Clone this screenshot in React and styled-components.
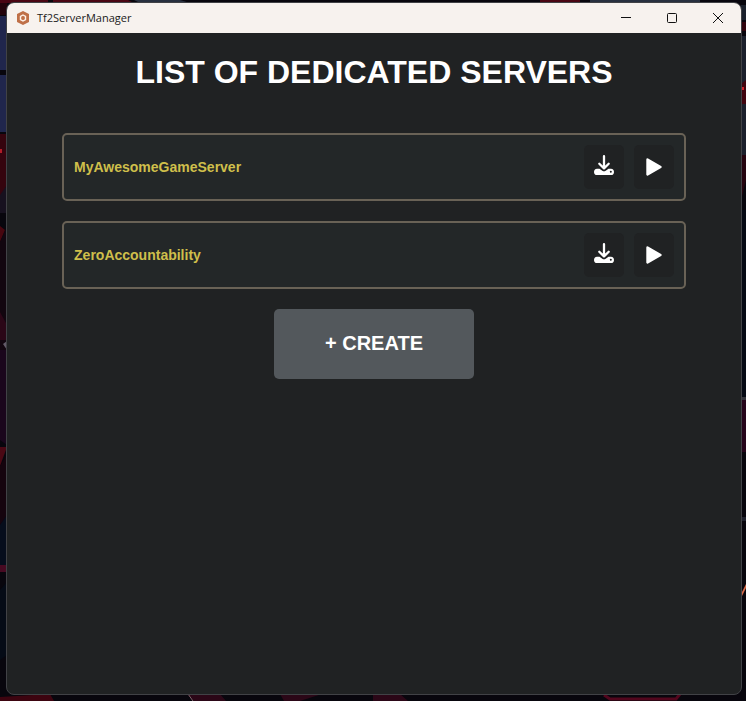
import React from "react";
import styled, { createGlobalStyle } from "styled-components";

const GlobalStyle = createGlobalStyle`
  *, *::before, *::after { box-sizing: border-box; }
  body { margin: 0; background: #07060c; }
`;

const Desktop = styled.div`
  position: relative;
  isolation: isolate;
  display: flex;
  min-height: 100vh;
  padding: 2px 4px 6px 6px;
`;

const WallpaperArt = styled.svg`
  position: absolute;
  inset: 0;
  z-index: -1;
  width: 100%;
  height: 100%;
`;

const AppWindow = styled.div`
  flex: 1;
  display: flex;
  flex-direction: column;
  overflow: hidden;
  border: 1px solid #414246;
  border-radius: 8px;
  background: #202223;
  font-family: "Liberation Sans", Arial, sans-serif;
`;

const TitleBar = styled.header`
  display: flex;
  align-items: center;
  height: 30px;
  padding-left: 9px;
  background: #f7f2ee;
  color: #1a1a1a;
`;

const AppName = styled.span`
  flex: 1;
  margin-left: 7px;
  font: 11px/16px "Open Sans", "Segoe UI", sans-serif;
`;

const WindowControls = styled.div`
  display: flex;
`;

const WindowButton = styled.button`
  display: grid;
  place-items: center;
  width: 46px;
  height: 30px;
  padding: 0;
  border: 0;
  background: transparent;
  color: #111;
  &:hover { background: #e6e1dd; }
`;

const Content = styled.main`
  display: flex;
  flex-direction: column;
  align-items: center;
  gap: 20px;
  padding: 20px 0;
`;

const Heading = styled.h1`
  margin: 0 0 22px;
  color: #fff;
  font-size: 32px;
  line-height: 38px;
  font-weight: 700;
`;

const ServerList = styled.ul`
  display: flex;
  flex-direction: column;
  gap: 20px;
  width: 85%;
  margin: 0;
  padding: 0;
  list-style: none;
`;

const ServerRow = styled.li`
  display: flex;
  align-items: center;
  gap: 10px;
  padding: 10px;
  border: 2px solid #696256;
  border-radius: 5px;
  background: #232728;
`;

const ServerName = styled.span`
  flex: 1;
  color: #cfbf4b;
  font-size: 14px;
  line-height: 18px;
  font-weight: 700;
`;

const IconButton = styled.button`
  display: grid;
  place-items: center;
  width: 40px;
  height: 44px;
  padding: 0;
  border: 0;
  border-radius: 5px;
  background: #202223;
  color: #fff;
  cursor: pointer;
`;

const CreateButton = styled.button`
  width: 200px;
  height: 70px;
  padding: 0 0 2px;
  border: 0;
  border-radius: 5px;
  background: #53585c;
  color: #fff;
  font: 700 20px/24px "Liberation Sans", Arial, sans-serif;
  cursor: pointer;
`;

const Wallpaper = () => (
  <WallpaperArt viewBox="0 0 746 701" preserveAspectRatio="none" aria-hidden="true">
    <rect width="746" height="701" fill="#08060d" />
    <path d="M0 0H48V3H0Z M53 0H128L134 3H53Z M540 0H580V3H540Z" fill="#4a0614" />
    <path d="M134 0H180L190 3H140Z M590 0H700V3H590Z" fill="#28303f" />
    <path d="M0 3H7V15H0Z" fill="#24040c" />
    <path d="M0 16H7V70H0Z M0 75H7V132H0Z" fill="#20264d" />
    <path d="M0 134H7V185L0 200Z" fill="#35040e" />
    <path d="M0 149H2V153H0Z" fill="#b01c28" />
    <path d="M0 195L7 185V213H0Z" fill="#17111f" />
    <path d="M0 226L5 230L0 242Z" fill="#47060f" />
    <path d="M0 242L7 226V350H0Z" fill="#12060f" />
    <path d="M0 312L7 325V340H0Z" fill="#2b0717" />
    <path d="M3 344L7 341V350Z" fill="#625b68" />
    <path d="M0 350H7V445L0 440Z" fill="#1a061c" />
    <path d="M0 447H7L0 466Z" fill="#4a0814" />
    <path d="M0 466L7 455V516L0 525Z" fill="#15040e" />
    <path d="M0 525L7 515V565H0Z" fill="#060d1c" />
    <path d="M0 565H7V572H0Z" fill="#470a22" />
    <path d="M0 590L7 582V655L0 660Z" fill="#050b16" />
    <path d="M741 5H746V20H741Z M741 36H746V155H741Z" fill="#1b202c" />
    <path d="M741 22H746V31H741Z" fill="#31040d" />
    <path d="M741 84L746 80V104H741Z" fill="#41050f" />
    <path d="M742 87H744V90H742Z" fill="#cf222b" />
    <path d="M741 155H746V180L741 200Z" fill="#25040f" />
    <path d="M741 210H746V398H741Z" fill="#050914" />
    <path d="M741 397H746V400H741Z" fill="#34343b" />
    <path d="M741 400H746V452H741Z" fill="#26051a" />
    <path d="M741 517H746V521H741Z" fill="#20222e" />
    <path d="M741 594L746 584V588L741 598Z" fill="#d46a49" />
    <path d="M0 697L50 694L54 701H0Z" fill="#3d0410" />
    <path d="M188 694H220L226 701H194Z M280 694H322L300 701H284Z M373 694H400L408 701H373Z" fill="#2b0717" />
    <path d="M188 694L193 701" stroke="#85616d" />
    <path d="M604 695L610 699H676L680 694" fill="none" stroke="#52061d" strokeWidth="3" />
  </WallpaperArt>
);

const AppIcon = () => (
  <svg width="14" height="14" viewBox="0 0 14 14" aria-hidden="true">
    <path d="M7 0L13 3V11L7 14L1 11V3Z" fill="#bf7048" />
    <path d="M7 4L9.500 5.500V8.500L7 10L4.500 8.500V5.500Z" fill="#bf7048" stroke="#fff3ea" strokeWidth="1.400" />
  </svg>
);

const ControlIcon = ({ d }) => (
  <svg width="12" height="12" viewBox="0 0 12 12" fill="none" stroke="currentColor" aria-hidden="true">
    <path d={d} />
  </svg>
);

const DownloadIcon = () => (
  <svg width="20" height="24" viewBox="0 0 20 24" fill="none" aria-hidden="true">
    <path
      fill="currentColor"
      fillRule="evenodd"
      d="M3 13.700H5.500L8.300 15.800Q10 16.800 11.700 15.800L14.500 13.700H17Q20 13.900 20 17Q20 20.100 17 20.100H3Q0 20.100 0 17Q0 13.900 3 13.700ZM16.800 15.700A1 1 0 1 0 16.800 17.700A1 1 0 1 0 16.800 15.700Z"
    />
    <path d="M10 1.200V13M5.300 8.800L10 13.400L14.700 8.800" stroke="currentColor" strokeWidth="2.300" strokeLinecap="round" strokeLinejoin="round" />
  </svg>
);

const PlayIcon = () => (
  <svg width="16" height="18" viewBox="0 0 16 18" aria-hidden="true">
    <path d="M1.500 1.500L14.500 9L1.500 16.500Z" fill="currentColor" stroke="currentColor" strokeWidth="2.400" strokeLinejoin="round" />
  </svg>
);

const controls = [
  { label: "Minimize", d: "M1 5.500H11" },
  { label: "Maximize", d: "M2.500 1.500H9.500Q10.500 1.500 10.500 2.500V9.500Q10.500 10.500 9.500 10.500H2.500Q1.500 10.500 1.500 9.500V2.500Q1.500 1.500 2.500 1.500Z" },
  { label: "Close", d: "M1 1L11 11M11 1L1 11" },
];

const servers = ["MyAwesomeGameServer", "ZeroAccountability"];

export default function App() {
  return (
    <Desktop>
      <GlobalStyle />
      <Wallpaper />
      <AppWindow>
        <TitleBar>
          <AppIcon />
          <AppName>Tf2ServerManager</AppName>
          <WindowControls>
            {controls.map(({ label, d }) => (
              <WindowButton key={label} type="button" aria-label={label}>
                <ControlIcon d={d} />
              </WindowButton>
            ))}
          </WindowControls>
        </TitleBar>
        <Content>
          <Heading>LIST OF DEDICATED SERVERS</Heading>
          <ServerList>
            {servers.map((name) => (
              <ServerRow key={name}>
                <ServerName>{name}</ServerName>
                <IconButton type="button" aria-label={`Download ${name}`}>
                  <DownloadIcon />
                </IconButton>
                <IconButton type="button" aria-label={`Start ${name}`}>
                  <PlayIcon />
                </IconButton>
              </ServerRow>
            ))}
          </ServerList>
          <CreateButton type="button">+ CREATE</CreateButton>
        </Content>
      </AppWindow>
    </Desktop>
  );
}
